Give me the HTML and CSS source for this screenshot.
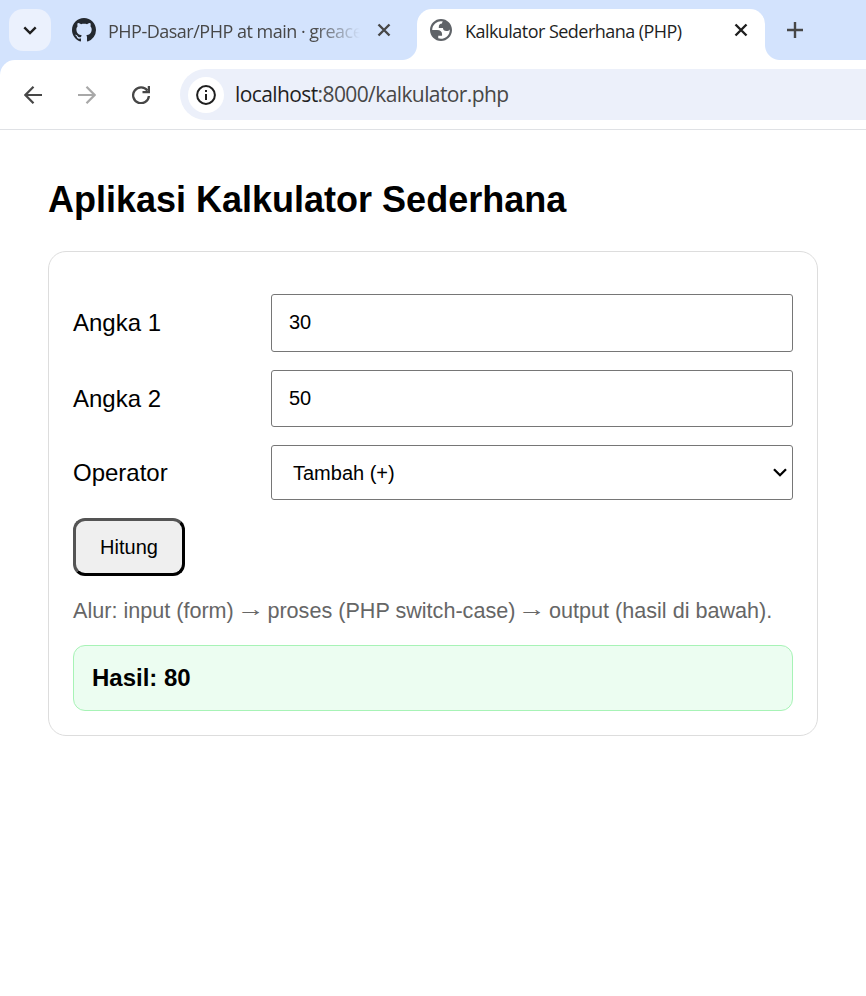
FILE: index.html
```html
<!DOCTYPE html>
<html lang="id">
<head>
<meta charset="utf-8">
<title>Kalkulator Sederhana (PHP)</title>
<link rel="stylesheet" href="styles.css">
</head>
<body>
<header class="browser">
  <div class="tabstrip">
    <div class="tab-search">
      <svg width="14" height="9" viewBox="0 0 14 9"><path d="M1.3 1.3 7 7l5.7-5.7" fill="none" stroke="#1f1f1f" stroke-width="2.4"/></svg>
    </div>
    <div class="tab">
      <svg class="favicon" width="24" height="24" viewBox="0 0 16 16"><path fill="#24292f" d="M8 0C3.58 0 0 3.58 0 8c0 3.54 2.29 6.53 5.47 7.59.4.07.55-.17.55-.38 0-.19-.01-.82-.01-1.49-2.01.37-2.53-.49-2.69-.94-.09-.23-.48-.94-.82-1.13-.28-.15-.68-.52-.01-.53.63-.01 1.08.58 1.23.82.72 1.21 1.87.87 2.33.66.07-.52.28-.87.51-1.07-1.78-.2-3.64-.89-3.64-3.95 0-.87.31-1.59.82-2.15-.08-.2-.36-1.02.08-2.12 0 0 .67-.21 2.2.82.64-.18 1.32-.27 2-.27s1.36.09 2 .27c1.53-1.04 2.2-.82 2.2-.82.44 1.1.16 1.92.08 2.12.51.56.82 1.27.82 2.15 0 3.07-1.87 3.75-3.65 3.95.29.25.54.73.54 1.48 0 1.07-.01 1.93-.01 2.2 0 .21.15.46.55.38A8.01 8.01 0 0 0 16 8c0-4.42-3.58-8-8-8z"/></svg>
      <span class="tab-title faded">PHP-Dasar/PHP at main · greace</span>
      <svg class="close" width="14" height="14" viewBox="0 0 14 14"><path d="m1.5 1.5 11 11m0-11-11 11" stroke="#474747" stroke-width="2.4"/></svg>
    </div>
    <div class="tab active">
      <svg class="favicon" width="22" height="22" viewBox="2 2 20 20"><path fill="#5f6368" fill-rule="evenodd" d="M12 2C6.48 2 2 6.48 2 12s4.48 10 10 10 10-4.48 10-10S17.52 2 12 2zM4 12h4.4c3.407.022 4.922 1.73 4.543 5.127H9.488v2.47a8.004 8.004 0 0 0 10.498-8.083C19.327 12.504 18.332 13 17 13c-2.137 0-3.206-.916-3.206-2.75h-3.748c-.274-2.728.683-4.092 2.87-4.092 0-.975.327-1.597.811-1.97A8.004 8.004 0 0 0 4 12z"/></svg>
      <span class="tab-title">Kalkulator Sederhana (PHP)</span>
      <svg class="close" width="14" height="14" viewBox="0 0 14 14"><path d="m1.5 1.5 11 11m0-11-11 11" stroke="#1f1f1f" stroke-width="2.4"/></svg>
    </div>
    <svg class="new-tab" width="16" height="16" viewBox="0 0 16 16"><path d="M8 0v16M0 8h16" stroke="#474747" stroke-width="2.4"/></svg>
  </div>
  <div class="toolbar">
    <svg class="nav" width="18" height="18" viewBox="0 0 18 18"><path d="M9.5.8 1.4 9l8.1 8.2M1.4 9H18" fill="none" stroke="#474747" stroke-width="2.2"/></svg>
    <svg class="nav" width="18" height="18" viewBox="0 0 18 18"><path d="M8.5.8 16.6 9l-8.1 8.2M16.6 9H0" fill="none" stroke="#a8a8a8" stroke-width="2.2"/></svg>
    <svg class="nav" width="18" height="18" viewBox="0 0 18 18"><path d="M15.4 4.6A7.9 7.9 0 1 0 16.9 10M16.9 0v6.1h-6.4" fill="none" stroke="#474747" stroke-width="2.3"/></svg>
    <div class="omnibox">
      <span class="site-info"><svg width="20" height="20" viewBox="0 0 20 20"><circle cx="10" cy="10" r="8.9" fill="none" stroke="#1f1f1f" stroke-width="2"/><path d="M10 9v6M10 5v2" stroke="#1f1f1f" stroke-width="2"/></svg></span>
      <span class="url"><b>localhost</b>:8000/kalkulator.php</span>
    </div>
  </div>
</header>
<main>
  <h1>Aplikasi Kalkulator Sederhana</h1>
  <form class="card">
    <div class="row"><label for="a">Angka 1</label><input id="a" class="first" type="text" value="30"></div>
    <div class="row"><label for="b">Angka 2</label><input id="b" type="text" value="50"></div>
    <div class="row"><label>Operator</label>
      <div class="select"><span>Tambah (+)</span><svg width="14" height="9" viewBox="0 0 14 9"><path d="M1 1.2 7 7.2l6-6" fill="none" stroke="#000" stroke-width="2.3"/></svg></div>
    </div>
    <button type="button">Hitung</button>
    <p class="hint">Alur: input (form) <span class="arrow">→</span> proses (PHP switch-case) <span class="arrow">→</span> output (hasil di bawah).</p>
    <div class="result">Hasil: 80</div>
  </form>
</main>
</body>
</html>
```
FILE: styles.css
```css
* { box-sizing: border-box; }
body { margin: 0; background: #fff; color: #000; font: 24px "Liberation Sans", Arial, sans-serif; }
svg { display: block; flex: none; }

.browser { font-family: "Open Sans", "Noto Sans", sans-serif; background: #d3e3fd; }
.tabstrip { display: flex; height: 60px; padding: 9px 0 0 9px; }
.tab-search { width: 42px; height: 42px; border-radius: 14px; background: #ebf1fd; display: flex; align-items: center; justify-content: center; }
.tab { display: flex; width: 366px; height: 51px; padding: 0 26px 9px 21px; align-items: center; }
.tab.active { position: relative; width: 348px; padding: 0 17px 9px 13px; background: #fff; border-radius: 15px 15px 0 0; }
.tab.active::before, .tab.active::after { content: ""; position: absolute; bottom: 0; width: 15px; height: 15px; }
.tab.active::before { left: -15px; background: radial-gradient(circle at 0 0, transparent 14.5px, #fff 15.5px); }
.tab.active::after { right: -15px; background: radial-gradient(circle at 100% 0, transparent 14.5px, #fff 15.5px); }
.tab-title { margin: 1px 0 0 12px; width: 254px; overflow: hidden; white-space: nowrap; font-size: 18px; letter-spacing: -0.54px; color: #474747; }
.active .tab-title { margin-left: 13px; width: 270px; color: #1f1f1f; }
.tab-title.faded { letter-spacing: -0.5px; -webkit-mask-image: linear-gradient(to right, #000 205px, transparent 252px); mask-image: linear-gradient(to right, #000 205px, transparent 252px); }
.close { margin-left: auto; }
.new-tab { margin: 13px 0 0 22px; }

.toolbar { display: flex; align-items: center; height: 70px; background: #fff; border-radius: 15px 0 0 0; border-bottom: 1px solid #dfe1e5; padding-left: 24px; }
.nav { margin-right: 36px; }
.omnibox { display: flex; align-items: center; flex: 1; height: 51px; margin-left: -6px; background: #ecf0fa; border-radius: 26px 0 0 26px; padding-left: 8px; }
.site-info { width: 36px; height: 36px; border-radius: 50%; background: #fff; display: flex; align-items: center; justify-content: center; }
.url { margin: -1px 0 0 11px; font-size: 21px; letter-spacing: -0.6px; color: #474747; }
.url b { font-weight: 400; color: #1f1f1f; }

main { padding: 48px; }
h1 { margin: 0; padding-top: 1px; font-size: 36px; line-height: 42px; }
.card { margin-top: 30px; border: 1px solid #ddd; border-radius: 18px; height: 485px; padding: 42px 24px 24px; }
.row { display: grid; grid-template-columns: 180px 1fr; gap: 18px; align-items: center; margin-bottom: 18px; }
input, .select { height: 57px; border: 1px solid #767676; border-radius: 3px; background: #fff; font: 20px "Liberation Sans", Arial, sans-serif; padding: 0 17px; }
input { width: 100%; }
.first { height: 58px; padding-bottom: 2px; }
.select { height: 55px; display: flex; align-items: center; justify-content: space-between; padding: 0 5px 0 21px; }
.select span { padding-top: 2px; }
button { display: block; width: 112px; height: 58px; padding: 0; border: 3px outset #000; border-radius: 12px; background: #efefef; color: #000; font: 20px "Liberation Sans", Arial, sans-serif; }
.hint { margin: 21px 0 0; line-height: 27px; font-size: 21.6px; color: #666; white-space: nowrap; }
.arrow { display: inline-block; transform: translateY(-2px) scaleX(1.3); }
.result { margin-top: 21px; height: 66px; line-height: 64px; padding-left: 18px; border: 1px solid #a7f3b6; border-radius: 12px; background: #ecfdf1; font-weight: 700; }
```
